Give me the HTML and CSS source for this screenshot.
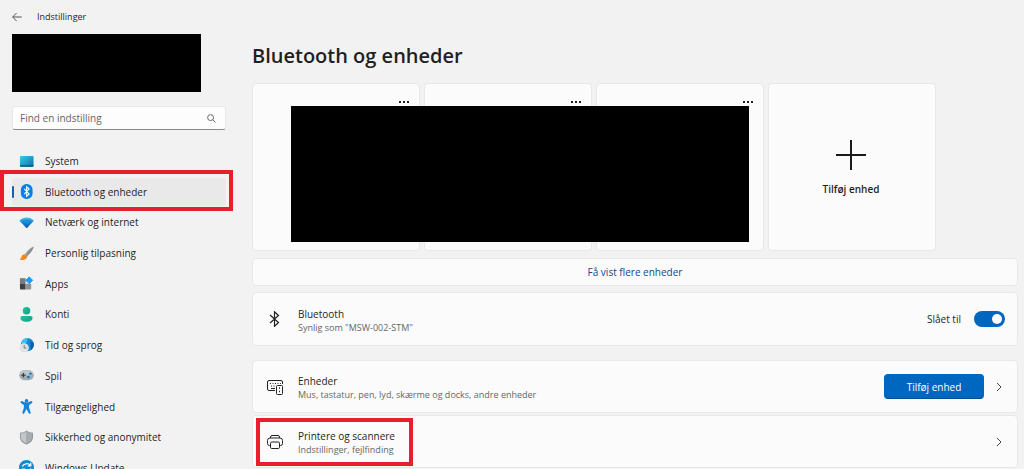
FILE: index.html
```html
<!DOCTYPE html>
<html lang="da">
<head>
    <meta charset="UTF-8">
    <meta name="viewport" content="width=device-width, initial-scale=1.0">
    <title>Indstillinger</title>
    <link rel="stylesheet" href="styles.css">
</head>
<body>
    <div class="app">
        <header class="titlebar">
            <button class="back" aria-label="Tilbage">
                <svg width="10" height="10" viewBox="0 0 10 10" fill="none" stroke="#555" stroke-width="1"><path d="M9.7 5H.8M4.6 1L.6 5l4 4"/></svg>
            </button>
            <span>Indstillinger</span>
        </header>

        <aside class="sidebar">
            <div class="account"></div>
            <form class="search">
                <input type="text" placeholder="Find en indstilling" aria-label="Find en indstilling">
                <svg width="9" height="9" viewBox="0 0 10 10" fill="none" stroke="#666" stroke-width="1.1"><circle cx="4" cy="4" r="3.3"/><path d="M6.4 6.4L9.5 9.5"/></svg>
            </form>
            <nav class="menu">
                <a href="#">
                    <svg viewBox="0 0 16 16">
                        <defs><linearGradient id="sys" x1="0" y1="0" x2="1" y2="1"><stop offset="0" stop-color="#35d0e8"/><stop offset="1" stop-color="#0a6fa8"/></linearGradient></defs>
                        <rect x="1" y="2" width="14.5" height="11.5" rx="1" fill="url(#sys)"/><path d="M1 12h14.5v.6a1 1 0 0 1-1 1H2a1 1 0 0 1-1-1z" fill="#075b86"/>
                    </svg>
                    System
                </a>
                <a href="#" class="active">
                    <svg viewBox="0 0 16 16"><rect x="2" y="0" width="12.5" height="16" rx="6" fill="#0a7cf0"/><path d="M5.5 5.300l5.300 5.300L8.200 13V3l2.600 2.400-5.300 5.300" fill="none" stroke="#fff" stroke-width="1.2"/></svg>
                    Bluetooth og enheder
                    <span class="marker"></span>
                </a>
                <a href="#">
                    <svg viewBox="0 0 16 16">
                        <defs><linearGradient id="net" x1="0" y1="0" x2="0" y2="1"><stop offset="0" stop-color="#35c3ee"/><stop offset=".45" stop-color="#1c8cdc"/><stop offset="1" stop-color="#0b4fa3"/></linearGradient></defs>
                        <path d="M.5 6C4.800 1.500 11.600 1.500 15.800 6L8.800 13.500a.8.8 0 0 1-1.200 0z" fill="url(#net)"/><path d="M3 8.300c3-3.200 7.400-3.200 10.300 0" fill="none" stroke="#1369bd" stroke-width=".6"/>
                    </svg>
                    Netværk og internet
                </a>
                <a href="#">
                    <svg viewBox="0 0 16 16"><path d="M15.700.5C12.500 1.500 8 5.800 6.200 9l2.400 2C11.500 8.500 15.300 3.800 15.700.5z" fill="#8a8d91"/><path d="M15.700.5C12 2.500 9 6 7.400 9.800L6.200 9C8 5.800 12.500 1.500 15.700.5z" fill="#b5b8bb"/><path d="M6.300 8.700c-2-.2-3.200 1-3.600 2.700-.3 1.300-1 2-2 2.600 3 1.800 7.800 1 8.200-3z" fill="#f08a1c"/></svg>
                    Personlig tilpasning
                </a>
                <a href="#">
                    <svg viewBox="0 0 16 16"><path d="M1 2.300h6v6H1z" fill="#777b80"/><path d="M1 8.300h6v6H2a1 1 0 0 1-1-1z" fill="#3d4145"/><path d="M7 8.300h6v5a1 1 0 0 1-1 1H7z" fill="#8f9296"/><path d="M10.900.9l3.700 3.700-3.700 3.700-3.700-3.700z" fill="#1e9cf0" stroke="#1e9cf0" stroke-width="1" stroke-linejoin="round"/></svg>
                    Apps
                </a>
                <a href="#">
                    <svg viewBox="0 0 16 16">
                        <defs><linearGradient id="acc" x1="0" y1="0" x2="1" y2="1"><stop offset="0" stop-color="#22c79a"/><stop offset="1" stop-color="#129c88"/></linearGradient></defs>
                        <circle cx="8" cy="4" r="4" fill="url(#acc)"/><path d="M3.500 9.500h9a2 2 0 0 1 2 2c0 2.800-2.800 4.300-6.500 4.300s-6.500-1.500-6.500-4.300a2 2 0 0 1 2-2z" fill="url(#acc)"/>
                    </svg>
                    Konti
                </a>
                <a href="#">
                    <svg viewBox="0 0 16 16"><circle cx="9" cy="7" r="7" fill="#1688d6"/><path d="M3 3.700C4.600 1 8 0 10 .1 8 2 9.500 4 7.500 5S5.500 7 3 8z" fill="#3bc3ea"/><path d="M12 3l3.800 2.500c.5 3-.8 6-3.300 7.500z" fill="#0b5ea8"/><circle cx="5.5" cy="10.5" r="5" fill="#dfe2e5"/><path d="M5.500 7.500v3.200h2.400" fill="none" stroke="#6c7075" stroke-width="1"/></svg>
                    Tid og sprog
                </a>
                <a href="#">
                    <svg viewBox="0 0 16 16"><rect x=".3" y="2.5" width="15.5" height="10.5" rx="5.2" fill="#a2abb4"/><rect x="1.2" y="3" width="13.6" height="5" rx="2.5" fill="#bcc4cb"/><path d="M4.700 5.300v4.600M2.400 7.600H7" stroke="#33383d" stroke-width="1.3"/><circle cx="12.3" cy="6" r="1.3" fill="#126cb4"/><circle cx="10" cy="9.5" r="1.3" fill="#126cb4"/></svg>
                    Spil
                </a>
                <a href="#">
                    <svg viewBox="0 0 16 16" fill="#1683d8"><circle cx="8" cy="2" r="2"/><path d="M1.800 2.800c.5-.9 1.200-.8 1.900-.3C6.500 4.600 9.500 4.600 12.300 2.500c.7-.5 1.500-.5 1.900.3s0 1.300-.6 1.700L10.800 6.300v3l1.600 5c.3 1.600-1.400 2.100-2 .9L8 10.700l-2.400 4.500c-.6 1.200-2.300.7-2-.9l1.600-5v-3L2.400 4.500c-.6-.4-1-.9-.6-1.700z"/></svg>
                    Tilgængelighed
                </a>
                <a href="#">
                    <svg viewBox="0 0 16 16"><path d="M8 .5c2 1.700 4.200 2.200 7 2.300v4.700c0 4-3 6.500-7 8-4-1.500-7-4-7-8V2.800C3.800 2.700 6 2.200 8 .5z" fill="#92989e"/><path d="M8 1.700v12.500c-3.500-1.400-6-3.500-6-6.800V3.700c2.400-.1 4.300-.7 6-2z" fill="#c3c7cb"/><path d="M8 1.700c1.700 1.300 3.600 1.900 6 2v3.700c0 3.300-2.500 5.400-6 6.800z" fill="#a7acb1"/></svg>
                    Sikkerhed og anonymitet
                </a>
                <a href="#">
                    <svg viewBox="0 0 16 16"><circle cx="8" cy="8" r="8" fill="#118ad6"/><path d="M3.500 7C5 3.500 9.800 3 12 5.800M12.500 3v3.200H9.300M12.500 9C11 12.500 6.200 13 4 10.200M3.500 13V9.800h3.200" fill="none" stroke="#fff" stroke-width="1.3"/></svg>
                    Windows Update
                </a>
            </nav>
        </aside>

        <main class="content">
            <h1>Bluetooth og enheder</h1>

            <div class="devices">
                <div class="card"><button class="more" aria-label="Flere indstillinger"><i></i><i></i><i></i></button></div>
                <div class="card"><button class="more" aria-label="Flere indstillinger"><i></i><i></i><i></i></button></div>
                <div class="card"><button class="more" aria-label="Flere indstillinger"><i></i><i></i><i></i></button></div>
                <button class="card add">
                    <svg width="30" height="30" viewBox="0 0 30 30" stroke="#1a1a1a" stroke-width="2"><path d="M15 0v30M0 15h30"/></svg>
                    Tilføj enhed
                </button>
                <div class="cover"></div>
            </div>

            <a href="#" class="show-more">Få vist flere enheder</a>

            <section class="row bluetooth">
                <svg class="row-icon" viewBox="0 0 16 16" fill="none" stroke="#222" stroke-width="1.2"><path d="M3 4l8.500 7.500L7.500 15.300V.7l4 3.800L3 12"/></svg>
                <div class="row-text">
                    <label for="bt">Bluetooth</label>
                    <p>Synlig som "MSW-002-STM"</p>
                </div>
                <span class="state">Slået til</span>
                <input type="checkbox" id="bt" class="toggle" checked>
            </section>

            <section class="row">
                <svg class="row-icon" viewBox="0 0 16 16" fill="none" stroke="#222" stroke-width="1"><path d="M8 11.500H2A1.500 1.500 0 0 1 .5 10V3A1.500 1.500 0 0 1 2 1.500h12A1.500 1.500 0 0 1 15.500 3v2M4 9.500h4"/><path d="M3 4.500h1M5.500 4.500h1M8 4.500h1M10.500 4.500h1M13 4.500h.8M4 7h1M6.500 7h1"/><rect x="9.5" y="6.5" width="6" height="9" rx="1"/><path d="M12 9h1M12 12.500h1" stroke-width="1.6"/></svg>
                <div class="row-text">
                    <h2>Enheder</h2>
                    <p>Mus, tastatur, pen, lyd, skærme og docks, andre enheder</p>
                </div>
                <button class="primary">Tilføj enhed</button>
                <svg class="chevron" viewBox="0 0 6 10"><path d="M1 1l4 4-4 4"/></svg>
            </section>

            <section class="row">
                <svg class="row-icon" viewBox="0 0 16 16" fill="none" stroke="#222" stroke-width="1"><path d="M3.500 4V3A1.500 1.500 0 0 1 5 1.500h6A1.500 1.500 0 0 1 12.500 3v1M3.500 11.500h-1A2 2 0 0 1 .5 9.500V6.500A2.500 2.500 0 0 1 3 4h10a2.500 2.500 0 0 1 2.500 2.500v3a2 2 0 0 1-2 2h-1"/><rect x="3.5" y="8" width="9" height="6.5" rx="1.2"/></svg>
                <div class="row-text">
                    <h2>Printere og scannere</h2>
                    <p>Indstillinger, fejlfinding</p>
                </div>
                <svg class="chevron" viewBox="0 0 6 10"><path d="M1 1l4 4-4 4"/></svg>
                <span class="marker"></span>
            </section>
        </main>
    </div>
</body>
</html>
```
FILE: styles.css
```css
* {
    box-sizing: border-box;
}

body {
    margin: 0;
    font-family: "Segoe UI", "Open Sans", "Noto Sans", sans-serif;
    font-size: 10px;
    line-height: 14px;
    color: #1f1f1f;
    background-color: #f2f2f2;
}

h1, h2, p {
    margin: 0;
}

button, input {
    font: inherit;
    color: inherit;
}

.app {
    display: grid;
    grid-template-columns: 226px 1fr;
    grid-template-rows: 34px 1fr;
    column-gap: 26px;
    height: 100vh;
    overflow: hidden;
}

/* Title bar */
.titlebar {
    grid-column: 1 / -1;
    display: flex;
    align-items: center;
    gap: 15px;
    padding: 0 12px;
    font-size: 9px;
}

.back {
    display: flex;
    padding: 0;
    border: none;
    background: none;
}

/* Sidebar */
.sidebar {
    padding-left: 12px;
}

.account {
    width: 189px;
    height: 58px;
    background-color: #000;
}

.search {
    display: flex;
    align-items: center;
    height: 24px;
    margin: 14px 0 17px;
    padding: 0 9px 0 7px;
    background-color: #fdfdfd;
    border: 1px solid #e8e8e8;
    border-bottom-color: #8a8a8a;
    border-radius: 3px;
}

.search input {
    flex: 1;
    min-width: 0;
    padding: 0;
    border: none;
    outline: none;
    background: none;
}

.search input::placeholder {
    color: #666;
}

.menu {
    display: flex;
    flex-direction: column;
    justify-content: space-between;
    height: 335px;
}

.menu a {
    position: relative;
    display: flex;
    align-items: center;
    gap: 11px;
    height: 28px;
    padding-left: 7px;
    border-radius: 3px;
    color: inherit;
    text-decoration: none;
}

.menu svg {
    width: 15px;
    height: 15px;
}

.menu .active {
    background-color: #e9e9e9;
}

.menu .active::before {
    content: "";
    position: absolute;
    left: 0;
    top: 8px;
    width: 2px;
    height: 12px;
    border-radius: 1px;
    background-color: #0f5fb5;
}

/* Red frames around the steps to follow */
.marker {
    position: absolute;
    border: 4px solid #e5202b;
}

.menu .marker {
    top: -8px;
    bottom: -5px;
    left: -12px;
    right: -7px;
}

.row .marker {
    top: 2px;
    bottom: 1px;
    left: 3px;
    width: 157px;
}

/* Content */
.content {
    padding: 8px 6px 0 0;
}

h1 {
    margin-bottom: 13px;
    font-size: 20px;
    line-height: 28px;
    font-weight: 600;
}

.card, .show-more, .row {
    background-color: #fbfbfb;
    border: 1px solid #e8e8e8;
    border-radius: 4px;
}

.devices {
    position: relative;
    display: grid;
    grid-template-columns: repeat(4, 168px);
    gap: 4px;
}

.card {
    height: 168px;
}

.more {
    display: flex;
    gap: 2px;
    margin: 12px 10px 0 auto;
    padding: 5px 0;
    border: none;
    background: none;
}

.more i {
    width: 2px;
    height: 2px;
    background-color: #222;
}

.add {
    display: flex;
    flex-direction: column;
    align-items: center;
    justify-content: center;
    gap: 12px;
    padding: 2px 2px 0 0;
    font-weight: 600;
}

.cover {
    position: absolute;
    top: 23px;
    left: 39px;
    width: 458px;
    height: 136px;
    background-color: #000;
}

.show-more {
    display: block;
    margin: 7px 0 6px;
    padding: 6px;
    text-align: center;
    color: #0a4a8c;
    text-decoration: none;
}

.row {
    position: relative;
    display: flex;
    align-items: center;
    height: 53px;
    margin-bottom: 2px;
    padding: 0 15px 0 14px;
}

.row.bluetooth {
    height: 54px;
    margin-bottom: 14px;
    padding-right: 12px;
}

.row-icon {
    width: 16px;
    height: 16px;
    margin-right: 15px;
}

.row-text {
    flex: 1;
    padding-top: 2px;
}

.row-text h2, .row-text label {
    display: block;
    font-size: 10px;
    font-weight: 400;
}

.row-text p {
    font-size: 9px;
    line-height: 13px;
    color: #666;
}

.toggle {
    appearance: none;
    display: flex;
    align-items: center;
    justify-content: flex-end;
    width: 31px;
    height: 16px;
    margin: 0 0 0 13px;
    padding: 0 3px;
    border-radius: 8px;
    background-color: #0067c0;
}

.toggle::before {
    content: "";
    width: 10px;
    height: 10px;
    border-radius: 50%;
    background-color: #fff;
}

.toggle:not(:checked) {
    justify-content: flex-start;
    background-color: #8a8a8a;
}

.primary {
    width: 100px;
    height: 25px;
    margin-right: 12px;
    padding: 0;
    border: 1px solid #0067c0;
    border-bottom-color: #004f94;
    border-radius: 4px;
    color: #fff;
    background-color: #0067c0;
}

.chevron {
    width: 6px;
    height: 10px;
    fill: none;
    stroke: #444;
    stroke-width: 1;
}
```
